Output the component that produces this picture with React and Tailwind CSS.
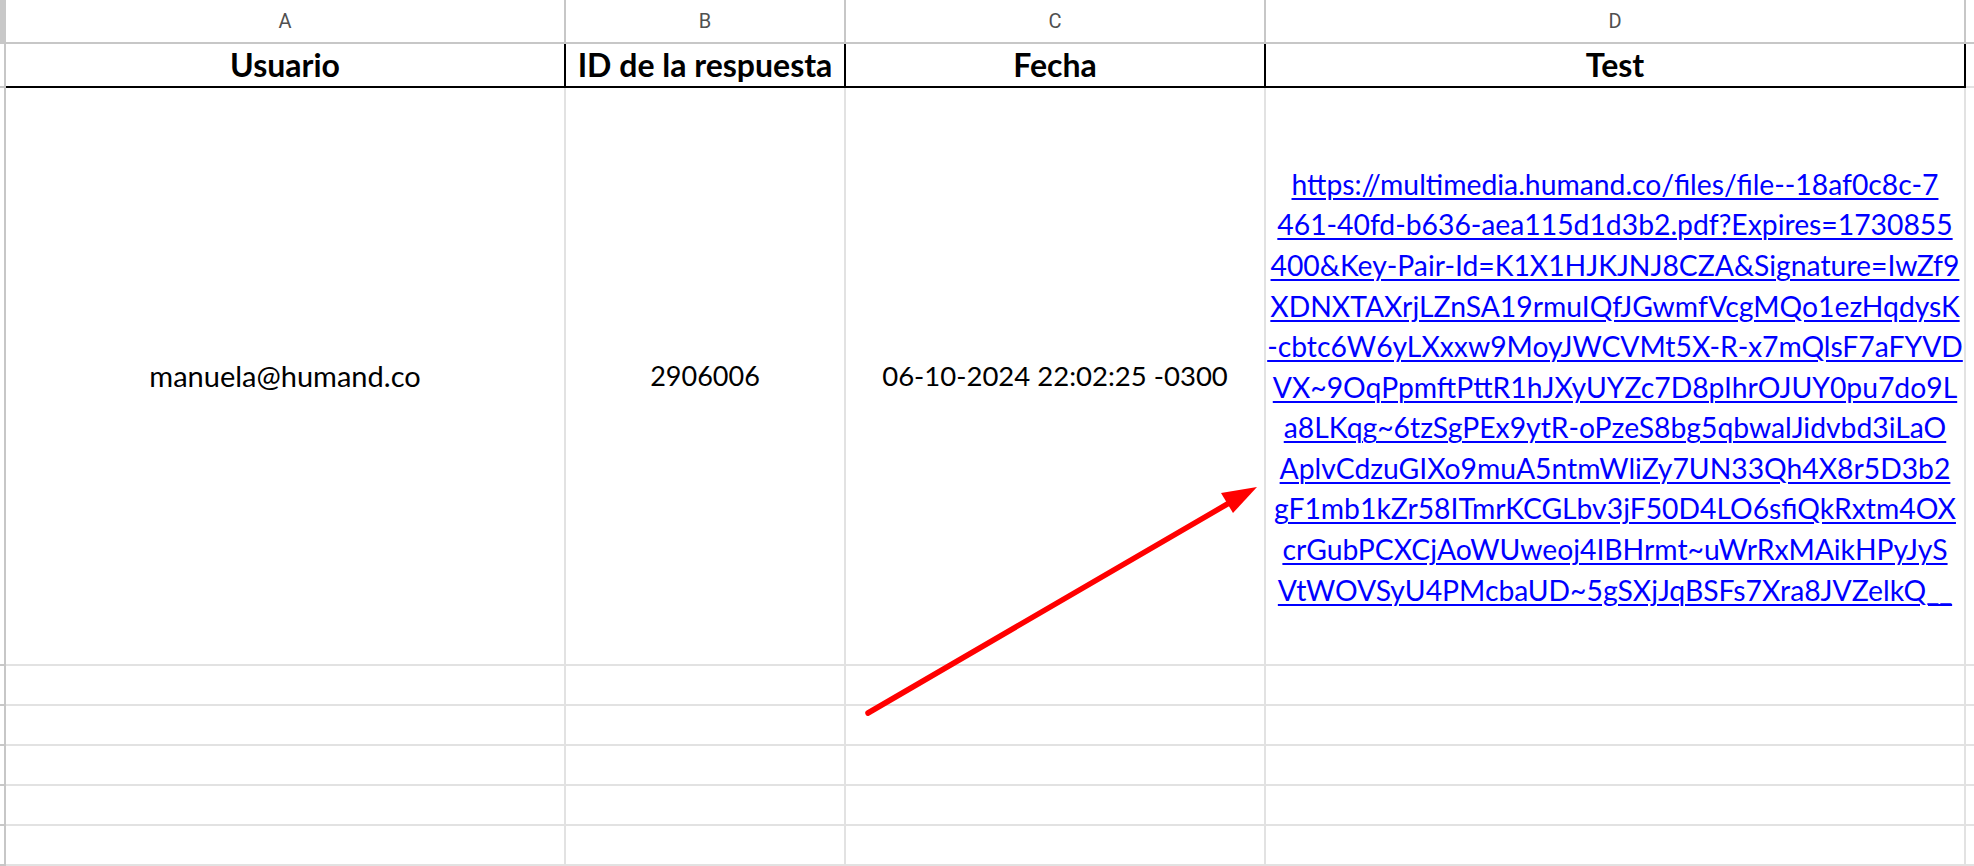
import React from 'react'

const linkLines = [
  'https://multimedia.humand.co/files/file--18af0c8c-7',
  '461-40fd-b636-aea115d1d3b2.pdf?Expires=1730855',
  '400&Key-Pair-Id=K1X1HJKJNJ8CZA&Signature=IwZf9',
  'XDNXTAXrjLZnSA19rmuIQfJGwmfVcgMQo1ezHqdysK',
  '-cbtc6W6yLXxxw9MoyJWCVMt5X-R-x7mQlsF7aFYVD',
  'VX~9OqPpmftPttR1hJXyUYZc7D8pIhrOJUY0pu7do9L',
  'a8LKqg~6tzSgPEx9ytR-oPzeS8bg5qbwalJidvbd3iLaO',
  'AplvCdzuGIXo9muA5ntmWliZy7UN33Qh4X8r5D3b2',
  'gF1mb1kZr58ITmrKCGLbv3jF50D4LO6sfiQkRxtm4OX',
  'crGubPCXCjAoWUweoj4IBHrmt~uWrRxMAikHPyJyS',
  'VtWOVSyU4PMcbaUD~5gSXjJqBSFs7Xra8JVZelkQ__',
]

const widths = ['w-[560px]', 'w-[280px]', 'w-[420px]', 'w-[700px]']
const letters = ['A', 'B', 'C', 'D']

function EmptyRow() {
  return (
    <div className="flex h-[40px]">
      <div className="w-[6px] shrink-0 border-r-2 border-b-2 border-[#c7c7c7]" />
      {widths.map((w) => (
        <div key={w} className={`${w} shrink-0 border-r-2 border-b-2 border-[#e2e2e2]`} />
      ))}
      <div className="flex-1 border-b-2 border-[#e2e2e2]" />
    </div>
  )
}

export default function App() {
  return (
    <div className="relative w-[1974px] h-[866px] overflow-hidden bg-white font-['Lato','Open_Sans',sans-serif] text-black">
      {/* column letters */}
      <div className="flex h-[44px]">
        <div className="w-[6px] shrink-0 bg-[#c8c8c8] border-b-2 border-[#c7c7c7]" />
        {widths.map((w, i) => (
          <div
            key={w}
            className={`${w} shrink-0 flex items-center justify-center border-r-2 border-b-2 border-[#c7c7c7] font-['Roboto','Liberation_Sans',sans-serif] text-[20px] text-[#505050]`}
          >
            {letters[i]}
          </div>
        ))}
        <div className="flex-1 border-b-2 border-[#c7c7c7]" />
      </div>

      {/* header row */}
      <div className="flex h-[44px]">
        <div className="w-[6px] shrink-0 border-r-2 border-b-2 border-[#c7c7c7]" />
        {['Usuario', 'ID de la respuesta', 'Fecha', 'Test'].map((t, i) => (
          <div
            key={t}
            className={`${widths[i]} shrink-0 flex items-center justify-center border-r-2 border-b-2 border-black text-[32px] leading-none font-bold`}
          >
            {t}
          </div>
        ))}
        <div className="flex-1 border-b-2 border-[#e2e2e2]" />
      </div>

      {/* data row */}
      <div className="flex h-[578px]">
        <div className="w-[6px] shrink-0 border-r-2 border-b-2 border-[#c7c7c7]" />
        <div className="w-[560px] shrink-0 flex items-center justify-center border-r-2 border-b-2 border-[#e2e2e2] text-[29px]">
          manuela@humand.co
        </div>
        <div className="w-[280px] shrink-0 flex items-center justify-center border-r-2 border-b-2 border-[#e2e2e2] text-[27px]">
          2906006
        </div>
        <div className="w-[420px] shrink-0 flex items-center justify-center border-r-2 border-b-2 border-[#e2e2e2] text-[27.5px]">
          06-10-2024 22:02:25 -0300
        </div>
        <div className="w-[700px] shrink-0 flex items-center justify-center pt-[22px] border-r-2 border-b-2 border-[#e2e2e2]">
          <div className="flex flex-col items-center text-[28.3px] leading-[40.6px] text-[#0000ff]">
            {linkLines.map((l) => (
              <span key={l} className="whitespace-nowrap underline decoration-2 underline-offset-[3px]">
                {l}
              </span>
            ))}
          </div>
        </div>
        <div className="flex-1 border-b-2 border-[#e2e2e2]" />
      </div>

      <EmptyRow />
      <EmptyRow />
      <EmptyRow />
      <EmptyRow />
      <EmptyRow />

      {/* red annotation arrow */}
      <svg className="absolute left-0 top-0 pointer-events-none" width="1974" height="866">
        <line x1="868" y1="713" x2="1236" y2="499" stroke="#ff0000" strokeWidth="5.5" strokeLinecap="round" />
        <polygon points="1257,487 1221,493 1233,513" fill="#ff0000" />
      </svg>
    </div>
  )
}
